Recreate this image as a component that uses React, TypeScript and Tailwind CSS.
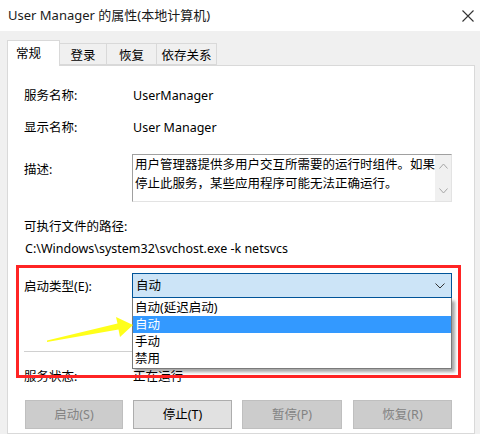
import React from "react";

const font = { fontFamily: '"Noto Sans", "Noto Sans CJK SC", sans-serif' };

function Chevron({ up }: { up?: boolean }) {
  return (
    <svg width="9" height="6" viewBox="0 0 9 6" className="block">
      <path
        d={up ? "M0.5 5.5 L4.5 1 L8.5 5.5" : "M0.5 0.5 L4.5 5 L8.5 0.5"}
        fill="none"
        stroke="#a6a6a6"
        strokeWidth="1"
      />
    </svg>
  );
}

export default function App() {
  return (
    <div
      className="relative w-[480px] h-[434px] overflow-hidden bg-[#f0f0f0] text-[12.5px] text-black flex flex-col"
      style={font}
    >
      {/* Title bar */}
      <div className="h-[31px] bg-white flex items-center justify-between pl-[8px] pr-[6px] shrink-0">
        <span className="text-[13px] leading-[19px] text-[#1a1a1a]">User Manager 的属性(本地计算机)</span>
        <svg width="12" height="12" viewBox="0 0 12 12">
          <path d="M0.5 0.5 L11.5 11.5 M11.5 0.5 L0.5 11.5" stroke="#333" strokeWidth="1.1" />
        </svg>
      </div>

      {/* Body */}
      <div className="flex-1 flex flex-col pl-[7px] pr-[5px] pt-[9px]">
        {/* Tabs */}
        <div className="flex items-end h-[25px] relative z-10">
          <div className="w-[53px] h-[26px] -mb-[1px] bg-white border border-b-0 border-[#d9d9d9] flex items-center pl-[8px] leading-[19px]">
            常规
          </div>
          <div className="w-[47px] h-[22px] bg-[#f0f0f0] border border-l-0 border-[#d9d9d9] flex items-center justify-center pt-[3px] leading-[19px]">
            登录
          </div>
          <div className="w-[50px] h-[22px] bg-[#f0f0f0] border border-l-0 border-[#d9d9d9] flex items-center justify-center pt-[3px] leading-[19px]">
            恢复
          </div>
          <div className="w-[60px] h-[22px] bg-[#f0f0f0] border border-l-0 border-[#d9d9d9] flex items-center justify-center pt-[3px] leading-[19px]">
            依存关系
          </div>
        </div>

        {/* Panel */}
        <div className="flex-1 bg-white border border-[#d9d9d9] pl-[16px] pr-[22px] pt-[20px] leading-[19px]">
          <div className="flex">
            <div className="w-[109px]">服务名称:</div>
            <div>UserManager</div>
          </div>
          <div className="flex mt-[13px]">
            <div className="w-[109px]">显示名称:</div>
            <div>User Manager</div>
          </div>
          <div className="flex mt-[17px]">
            <div className="w-[108px] mt-[6px]">描述:</div>
            <div className="flex-1 h-[48px] border-t border-l border-[#a0a0a0] border-r border-b border-r-[#e3e3e3] border-b-[#e3e3e3] flex">
              <div className="flex-1 pl-[2px] pt-0 whitespace-nowrap overflow-hidden">
                用户管理器提供多用户交互所需要的运行时组件。如果
                <br />
                停止此服务，某些应用程序可能无法正确运行。
              </div>
              <div className="w-[16px] bg-[#f0f0f0] flex flex-col items-center justify-between pt-[8px] pb-[7px]">
                <Chevron up />
                <Chevron />
              </div>
            </div>
          </div>
          <div className="mt-[15px]">可执行文件的路径:</div>
          <div className="mt-[3px] pl-[1px]">C:\Windows\system32\svchost.exe -k netsvcs</div>

          <div className="flex items-center mt-[15px]">
            <div className="w-[108px] pt-[2px]">启动类型(E):</div>
            <div className="relative flex-1">
              <div className="h-[25px] bg-[#cce4f7] border border-[#005499] flex items-center justify-between pl-[3px] pr-[6px]">
                <span>自动</span>
                <svg width="10" height="6" viewBox="0 0 10 6">
                  <path d="M0.5 0.5 L5 5 L9.5 0.5" fill="none" stroke="#333" strokeWidth="1" />
                </svg>
              </div>
              <div className="absolute left-0 right-0 top-full z-20 bg-white border border-t-0 border-[#7a7a7a] py-[1px] shadow-[3px_3px_3px_rgba(0,0,0,0.35)]">
                <div className="h-[17px] leading-[17px] pl-[2px]">自动(延迟启动)</div>
                <div className="h-[17px] leading-[17px] pl-[2px] bg-[#3399ff] text-white">自动</div>
                <div className="h-[17px] leading-[17px] pl-[2px]">手动</div>
                <div className="h-[17px] leading-[17px] pl-[2px]">禁用</div>
              </div>
            </div>
          </div>

          <div className="mt-[53px] h-[1px] bg-[#d0d0d0]" />

          <div className="flex mt-[15px]">
            <div className="w-[109px]">服务状态:</div>
            <div>正在运行</div>
          </div>

          <div className="flex mt-[14px] gap-[10px] pl-[1px]">
            <div className="w-[98px] h-[29px] bg-[#cccccc] border border-[#bfbfbf] flex items-center justify-center text-[#838383]">
              启动(S)
            </div>
            <div className="w-[99px] h-[29px] bg-[#e1e1e1] border border-[#adadad] flex items-center justify-center">
              停止(T)
            </div>
            <div className="w-[100px] h-[29px] bg-[#cccccc] border border-[#bfbfbf] flex items-center justify-center text-[#838383]">
              暂停(P)
            </div>
            <div className="w-[99px] h-[29px] ml-[1px] bg-[#cccccc] border border-[#bfbfbf] flex items-center justify-center text-[#838383]">
              恢复(R)
            </div>
          </div>
        </div>
      </div>

      {/* Annotation overlay: red box */}
      <div className="absolute left-[16px] top-[265px] w-[445px] h-[113px] border-[3px] border-[#ff2424] z-30 pointer-events-none" />

      {/* Annotation overlay: yellow arrow */}
      <svg
        className="absolute left-0 top-0 z-30 pointer-events-none"
        width="480"
        height="434"
        viewBox="0 0 480 434"
      >
        <polygon
          points="47,340.5 117.5,323.5 116,317 133,325 120,337 118.5,329.5 47,342"
          fill="#ffff1a"
        />
      </svg>
    </div>
  );
}
